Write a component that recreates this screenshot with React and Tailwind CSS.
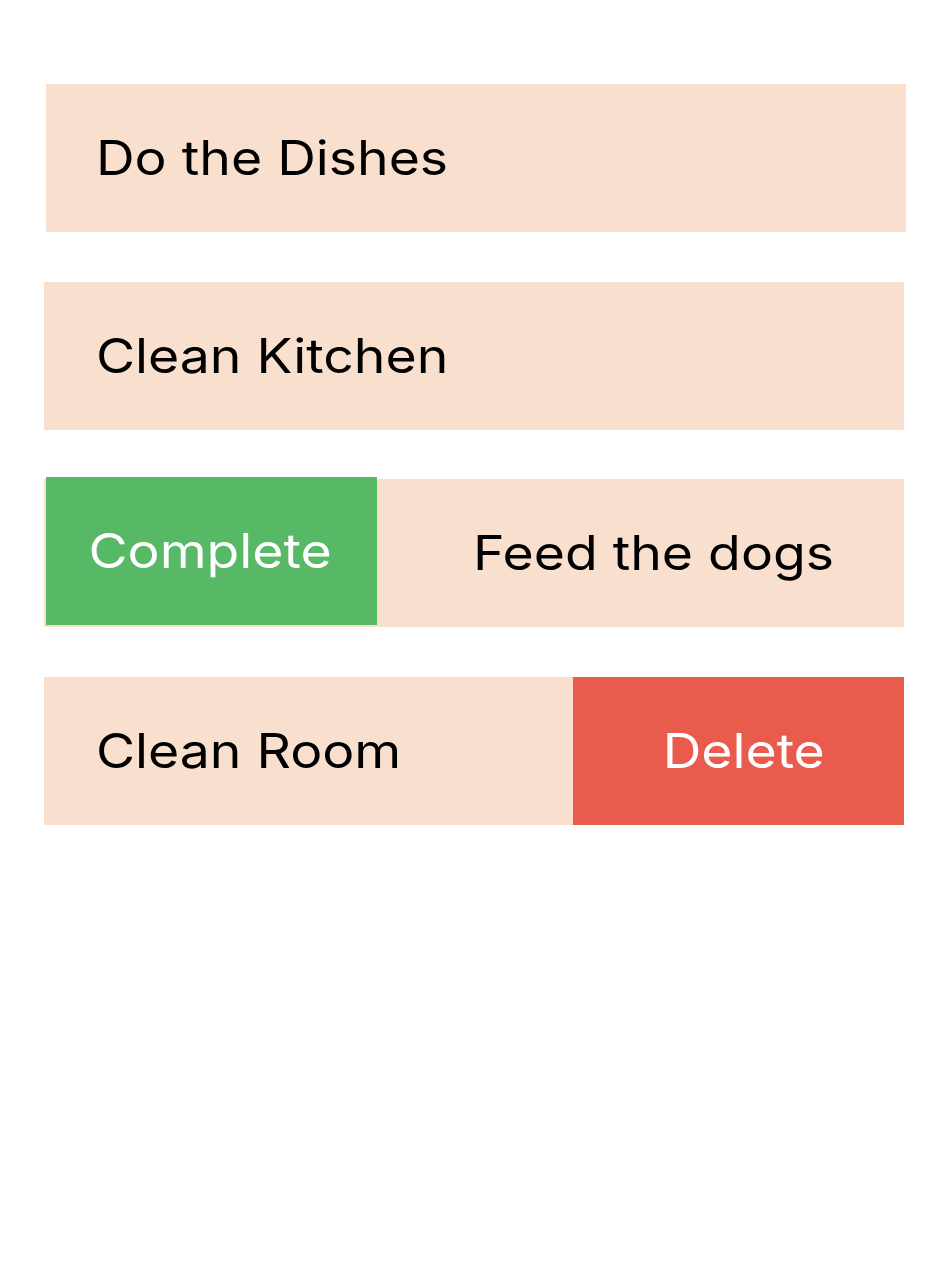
function Label({ children, origin = "origin-left" }) {
  // the reference text is rendered a little wide, so stretch it horizontally
  return <span className={`inline-block scale-x-[1.115] ${origin}`}>{children}</span>;
}

export default function App() {
  const font = { fontFamily: "Inter, 'Noto Sans', sans-serif" };
  return (
    <div className="w-[944px] h-[1278px] bg-white pt-[84px]" style={font}>
      {/* plain rows */}
      <div className="ml-[46px] w-[860px] h-[148px] bg-[#f9dfcd] flex items-center pl-[50px] text-[48px] text-black">
        <Label>Do the Dishes</Label>
      </div>
      <div className="ml-[44px] mt-[50px] w-[860px] h-[148px] bg-[#f9dfcd] flex items-center pl-[52px] text-[48px] text-black">
        <Label>Clean Kitchen</Label>
      </div>

      {/* swiped right: complete action */}
      <div className="ml-[44px] mt-[49px] w-[860px] h-[148px] bg-[#f9dfcd] flex items-start text-[48px]">
        <div className="ml-[2px] -mt-[2px] w-[331px] h-[148px] bg-[#57b966] text-white flex items-center justify-center pr-[3px]">
          <Label origin="origin-center">Complete</Label>
        </div>
        <div className="h-[148px] flex items-center ml-[96px] text-black">
          <Label>Feed the dogs</Label>
        </div>
      </div>

      {/* swiped left: delete action */}
      <div className="ml-[44px] mt-[50px] w-[860px] h-[148px] bg-[#f9dfcd] flex items-stretch text-[48px]">
        <div className="flex-1 flex items-center pl-[52px] text-black">
          <Label>Clean Room</Label>
        </div>
        <div className="w-[331px] bg-[#e95c4d] text-white flex items-center justify-center pl-[11px]">
          <Label origin="origin-center">Delete</Label>
        </div>
      </div>
    </div>
  );
}
